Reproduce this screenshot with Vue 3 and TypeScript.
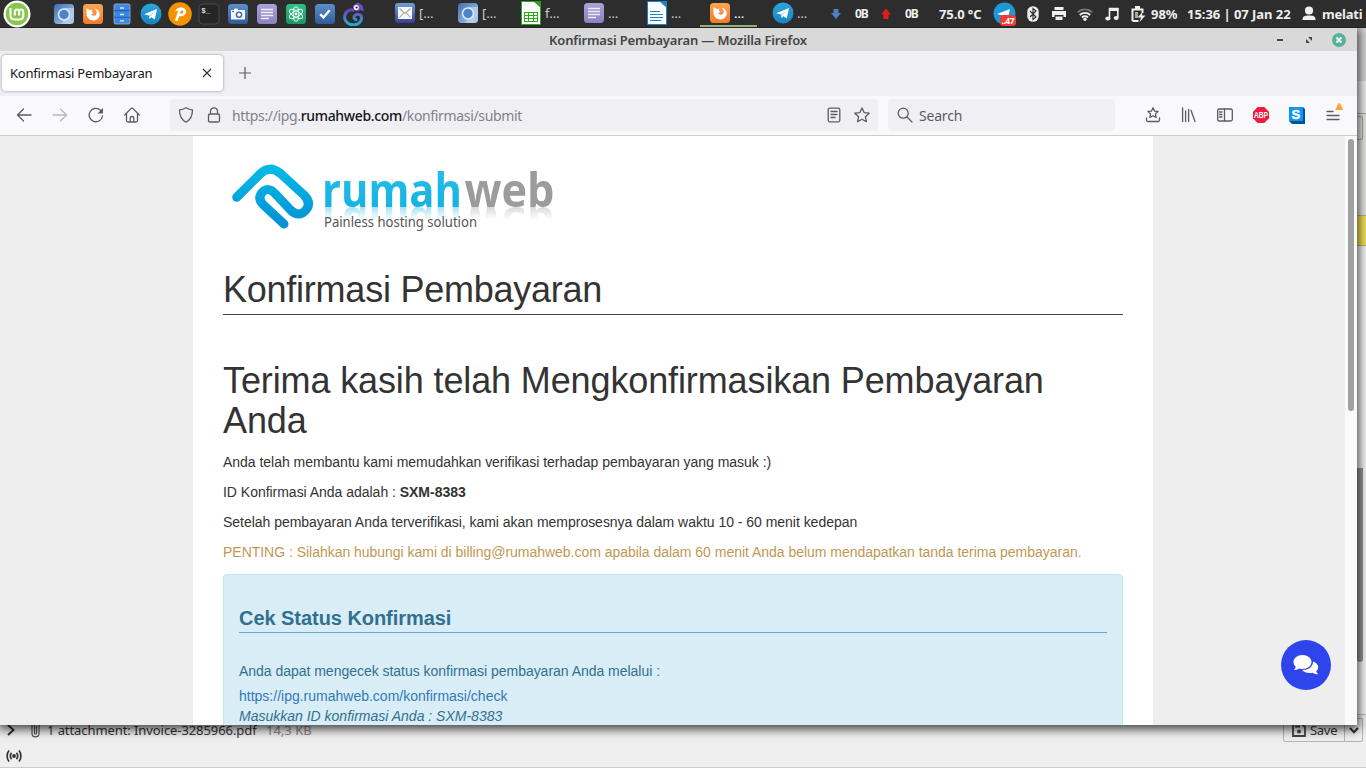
<script setup lang="ts">
interface Item {
  icon: string
  label?: string
  active?: boolean
}

const launchers: Item[] = [
  { icon: 'chromium' },
  { icon: 'firefox' },
  { icon: 'cabinet' },
  { icon: 'telegram' },
  { icon: 'pidgin' },
  { icon: 'terminal' },
  { icon: 'camera' },
  { icon: 'notes' },
  { icon: 'atom' },
  { icon: 'check' },
  { icon: 'chameleon' },
]

const windows: Item[] = [
  { icon: 'mail', label: '[…' },
  { icon: 'chromium', label: '[…' },
  { icon: 'calc', label: 'f…' },
  { icon: 'notes', label: '…' },
  { icon: 'writer', label: '…' },
  { icon: 'firefox', label: '…', active: true },
  { icon: 'telegram', label: '…' },
]
</script>

<template>
  <div class="desktop">
    <svg class="defs" width="0" height="0" aria-hidden="true">
      <defs>
        <linearGradient id="gChrome" x1="0" y1="0" x2="1" y2="1"><stop offset="0" stop-color="#3d6fb0" /><stop offset="1" stop-color="#b5d3ef" /></linearGradient>
        <linearGradient id="gFox" x1="0" y1="0" x2="0" y2="1"><stop offset="0" stop-color="#ffa551" /><stop offset="1" stop-color="#f07a2c" /></linearGradient>
        <linearGradient id="gTg" x1="0" y1="0" x2="0" y2="1"><stop offset="0" stop-color="#2ba6de" /><stop offset="1" stop-color="#1784c0" /></linearGradient>
        <linearGradient id="gLilac" x1="0" y1="0" x2="0" y2="1"><stop offset="0" stop-color="#aaa2d8" /><stop offset="1" stop-color="#8b81c2" /></linearGradient>
        <linearGradient id="gBlue" x1="0" y1="0" x2="0" y2="1"><stop offset="0" stop-color="#5d8fcc" /><stop offset="1" stop-color="#2f5a9c" /></linearGradient>
        <linearGradient id="gMail" x1="0" y1="0" x2="0" y2="1"><stop offset="0" stop-color="#6ba0d4" /><stop offset="1" stop-color="#3b3f95" /></linearGradient>
        <linearGradient id="gCham" x1="0" y1="0" x2="0" y2="1"><stop offset="0" stop-color="#6b45b8" /><stop offset="1" stop-color="#1faed0" /></linearGradient>
        <linearGradient id="gAtom" x1="0" y1="0" x2="0" y2="1"><stop offset="0" stop-color="#2fbf86" /><stop offset="1" stop-color="#1d9465" /></linearGradient>
        <linearGradient id="gLogo" x1="0" y1="0" x2="0" y2="1"><stop offset="0" stop-color="#05b8e6" /><stop offset="1" stop-color="#0492d6" /></linearGradient>
        <linearGradient id="gWord" x1="0" y1="0" x2="0" y2="1"><stop offset="0" stop-color="#2fc2e8" /><stop offset="1" stop-color="#0eaee2" /></linearGradient>
        <symbol id="chromium" viewBox="0 0 22 22">
          <rect x="1" y="1" width="20" height="20" rx="3.5" fill="url(#gChrome)" />
          <path d="M11 5h10v7l-5 9H8l5-6z" fill="#b9d3ee" opacity=".75" />
          <circle cx="11" cy="11.5" r="6.2" fill="#dfeaf6" /><circle cx="11" cy="11.5" r="4.7" fill="#4c84c8" />
        </symbol>
        <symbol id="firefox" viewBox="0 0 22 22">
          <rect x="1" y="1" width="20" height="20" rx="3.5" fill="url(#gFox)" />
          <path d="M5.2 5.4 7.7 7l2.8-.2-1 2 2.2 1.1-2.4 1.2c.5 2 3.7 2.2 5 .4 1.1-1.9 0-4-1.6-5.8 3.5.7 5.4 3.2 5 6.200-.4 3.300-3 5.500-6.300 5.500-3.800 0-6.900-2.900-6.900-6.700 0-2 .2-3.800-.3-5.300z" fill="#fff" />
        </symbol>
        <symbol id="cabinet" viewBox="0 0 22 22">
          <rect x="3" y="1" width="16" height="20" rx="1.5" fill="#3c87e2" stroke="#a9b3c4" stroke-width=".8" />
          <path d="M3 7.7h16M3 14.3h16" stroke="#1c5eb2" /><path d="M9 5h4M9 11.5h4M9 17.8h4" stroke="#d9ecff" stroke-width="1.3" />
        </symbol>
        <symbol id="telegram" viewBox="0 0 22 22">
          <circle cx="11" cy="11" r="10.5" fill="url(#gTg)" />
          <path d="M4.200 11.200 17 6l-2.200 10.600-3.400-2.400-2 1.900-.6-3.500z" fill="#fff" /><path d="m9 12.800 5.500-4.600-4.400 5.500-.6 2.300z" fill="#a9cfe6" />
        </symbol>
        <symbol id="pidgin" viewBox="0 0 24 24">
          <circle cx="12" cy="12" r="11.8" fill="#f49200" />
          <path d="M7 9.500C8 6.500 11 5 14 5.500c3.200.5 4.600 3 3.800 5.500-.8 2.600-3.400 3.600-6.600 3.300L9.500 19l-2.700-.2 3.400-10.300z" fill="#fff" /><path d="m13 8.500-1 3.300c2 .1 3-.7 3.200-1.900.1-1-.8-1.400-2.200-1.400z" fill="#f49200" />
        </symbol>
        <symbol id="terminal" viewBox="0 0 22 22">
          <rect x="1" y="1" width="20" height="20" rx="3.5" fill="#262626" stroke="#4b4b4b" />
          <text x="3.300" y="10" font-size="7.5" fill="#ddd" font-family="Liberation Mono" font-weight="700">$_</text>
        </symbol>
        <symbol id="camera" viewBox="0 0 22 22">
          <rect x="1" y="1" width="20" height="20" rx="3.5" fill="url(#gBlue)" />
          <path d="M4 7h3l.5-1.500h3L11 7h7v9.500H4z" fill="#f5f7fb" /><circle cx="12" cy="11.700" r="3.300" fill="#3866a8" /><circle cx="12" cy="11.700" r="1.900" fill="#f5f7fb" /><path d="M5 8.500h2" stroke="#3866a8" />
        </symbol>
        <symbol id="notes" viewBox="0 0 22 22">
          <rect x="1" y="1" width="20" height="20" rx="3.5" fill="url(#gLilac)" />
          <path d="M5 6.500h12M5 9.500h12M5 12.500h12M5 15.500h8" stroke="#eeecf8" stroke-width="1.4" />
        </symbol>
        <symbol id="atom" viewBox="0 0 22 22">
          <rect x="1" y="1" width="20" height="20" rx="3.5" fill="url(#gAtom)" />
          <g fill="none" stroke="#dff7ec" stroke-width="1.1"><ellipse cx="11" cy="11" rx="2.9" ry="7.3" /><ellipse cx="11" cy="11" rx="2.9" ry="7.3" transform="rotate(60 11 11)" /><ellipse cx="11" cy="11" rx="2.9" ry="7.3" transform="rotate(120 11 11)" /></g><circle cx="11" cy="11" r="1.4" fill="#fff" />
        </symbol>
        <symbol id="check" viewBox="0 0 22 22">
          <rect x="1" y="1" width="20" height="20" rx="3.5" fill="url(#gBlue)" />
          <path d="m6.200 11.200 3.200 3.300 6.200-7.300" fill="none" stroke="#fff" stroke-width="2.4" />
        </symbol>
        <symbol id="chameleon" viewBox="0 0 22 24">
          <path d="M11.500 8.500C7 6 1.500 10 1.600 15c.1 5 4.500 8 9.400 7.800 5-.2 8-4 7.500-7.600-.4-2.800-4.800-4-6.800-1.800-1.700 2-.1 4.700 2.500 4" fill="none" stroke="url(#gCham)" stroke-width="3" />
          <path d="M10 3.500 15 .5l4.500 3 1.300 5.500-3.500-1-3 1.500-4.500-1z" fill="#6a50bd" /><circle cx="13.300" cy="5.500" r="2.500" fill="#fff" /><circle cx="13.600" cy="5.500" r="1.100" fill="#222" />
        </symbol>
        <symbol id="mail" viewBox="0 0 22 22">
          <rect x="1" y="1" width="20" height="20" rx="3" fill="url(#gMail)" />
          <rect x="4" y="5" width="14" height="12" fill="#f6f6f4" /><path d="m5.500 6.500 5.500 5 5.500-5M5.500 15.500l4-4.500M16.500 15.500l-4-4.500" fill="none" stroke="#aaa9a4" stroke-width="1.1" />
        </symbol>
        <symbol id="calc" viewBox="0 0 22 24">
          <path d="M1.500.5H15l5.500 5v18h-19z" fill="#fff" stroke="#2ca81f" /><path d="M13 0h8v7z" fill="#2c9f1e" />
          <path d="M4.500 11.500h13v9h-13zM4.500 14.500h13M4.500 17.500h13M8.500 11.500v9M13.500 11.500v9" fill="none" stroke="#2ca81f" stroke-width="1.1" />
        </symbol>
        <symbol id="writer" viewBox="0 0 22 24">
          <path d="M1.500.5H15l5.500 5v18h-19z" fill="#fff" stroke="#1584cd" /><path d="M13 0h8v7z" fill="#1584cd" />
          <path d="M4 10.500h10M4 13.500h13M4 16.500h13M4 19.500h11" stroke="#1584cd" stroke-width="1.2" />
        </symbol>
      </defs>
    </svg>

    <header class="panel">
      <svg class="mint" width="28" height="28" viewBox="0 0 28 28">
        <circle cx="14" cy="14" r="13.5" fill="#fff" /><circle cx="14" cy="14" r="11.3" fill="#86c64b" />
        <path d="M7.500 8v7.500c0 2.500 1.500 4 4 4h4.500c2.700 0 4.300-1.500 4.300-4V12c0-3.300-4.200-3.300-4.200 0v3.500M16.100 12c0-3.300-4.300-3.300-4.300 0v3.500" fill="none" stroke="#fff" stroke-width="2.1" />
      </svg>
      <nav class="launchers">
        <span v-for="l in launchers" :key="l.icon" class="launcher"><svg :class="['ico', l.icon]"><use :href="'#' + l.icon" /></svg></span>
      </nav>
      <nav class="tasks">
        <span v-for="(w, i) in windows" :key="i" :class="['task', { active: w.active }]"><svg :class="['ico', w.icon]"><use :href="'#' + w.icon" /></svg><span class="task-label">{{ w.label }}</span></span>
      </nav>
      <div class="tray">
        <svg class="net" width="12" height="12" viewBox="0 0 12 12"><path d="M3.500 1h5v4H11l-5 6-5-6h2.500z" fill="#4d7fc0" /></svg>
        <span class="rate down">0B</span>
        <svg class="net" width="12" height="12" viewBox="0 0 12 12"><path d="M3.500 11h5V6.500H11l-5-6-5 6h2.500z" fill="#e01d1d" /></svg>
        <span class="rate up">0B</span>
        <span class="temp">75.0 °C</span>
        <svg class="tray-tg" width="23" height="25" viewBox="0 0 23 25">
          <circle cx="11.500" cy="12.500" r="11" fill="#1d97d6" /><path d="m4 13 13-5-2 9-4-2-3-1z" fill="#fff" />
          <rect x="7" y="14" width="16" height="11" rx="3" fill="#ef3b36" /><text x="8.500" y="22.500" font-family="Noto Sans" font-size="8.5" fill="#fff" textLength="13">..47</text>
        </svg>
        <svg class="bt" width="12" height="16" viewBox="0 0 12 16"><rect x=".3" y=".2" width="11.400" height="15.600" rx="5.500" fill="#f0f0f0" /><path d="m3 5 6 6-3 2.500v-11L9 5l-6 6" fill="none" stroke="#2d2d2d" stroke-width="1.1" /></svg>
        <svg class="pr" width="14" height="14" viewBox="0 0 14 14"><path d="M2.500 0h9v3h-9zM0 4h14v6h-2.500V8h-9v2H0zM3.500 9.500h7V13h-7z" fill="#f0f0f0" /></svg>
        <svg class="wf" width="16" height="14" viewBox="0 0 16 14"><g fill="none" stroke-width="1.9"><path d="M.8 5.200a10.500 10.500 0 0 1 14.400 0" stroke="#777" /><path d="M2.800 8a7.500 7.500 0 0 1 10.400 0M5 10.500a4.300 4.300 0 0 1 6 0" stroke="#f0f0f0" /></g><circle cx="8" cy="12.300" r="1.700" fill="#f0f0f0" /></svg>
        <svg class="mu" width="14" height="14" viewBox="0 0 14 14"><path d="M4.500 11V1.500h8.300v9" fill="none" stroke="#f0f0f0" stroke-width="1.6" /><path d="M4 1h9.500v3H4z" fill="#f0f0f0" /><ellipse cx="2.900" cy="11.500" rx="2.600" ry="2" fill="#f0f0f0" /><ellipse cx="11.200" cy="11" rx="2.500" ry="2" fill="#f0f0f0" /></svg>
        <svg class="ba" width="15" height="16" viewBox="0 0 15 16"><path d="M1.500 15V3.500h10V7M1.500 15h6" fill="none" stroke="#f0f0f0" stroke-width="2" /><path d="M4 0h5v3H4z" fill="#f0f0f0" /><path d="M4 6h3v6H4z" fill="#aaa" /><path d="M11.500 6 6.500 11.500H10L8.500 16l6-6.500h-3.500z" fill="#f0f0f0" /></svg>
        <span class="pct">98%</span>
        <span class="clock">15:36 | 07 Jan 22</span>
        <svg class="us" width="14" height="15" viewBox="0 0 14 15"><circle cx="7" cy="4.500" r="4.100" fill="#f0f0f0" /><path d="M.5 14c0-4 2.500-4.500 6.500-4.500s6.500.5 6.500 4.500z" fill="#f0f0f0" /></svg>
        <span class="user">melati</span>
      </div>
    </header>

    <section class="mailer">
      <div class="mail-body">
        <div class="side">
          <div class="side-title"></div>
          <div class="side-tools"></div>
          <div class="side-rest"><div class="side-button"></div></div>
          <div class="side-flag"></div>
          <div class="side-scroll"><div class="side-thumb"></div></div>
        </div>
      </div>
      <div class="attachments">
        <svg class="chev" width="8" height="12" viewBox="0 0 8 12"><path d="m1 1 5.500 5L1 11" fill="none" stroke="#333" stroke-width="2" /></svg>
        <svg class="clip" width="9" height="16" viewBox="0 0 9 16"><path d="M1 3v8.500c0 4.500 7 4.500 7 0V3c0-3-4.500-3-4.500 0v8c0 1.500 2 1.500 2 0V4" fill="none" stroke="#555" stroke-width="1.2" /></svg>
        <span class="att-name">1 attachment: Invoice-3285966.pdf</span>
        <span class="att-size">14,3 KB</span>
        <div class="save">
          <span class="save-main"><svg width="14" height="14" viewBox="0 0 14 14"><path d="M1 1h9l3 3v9H1z" fill="none" stroke="#444" stroke-width="1.8" /><circle cx="7" cy="8.500" r="2" fill="#444" /><path d="M3 3.500h5" stroke="#444" stroke-width="2" /></svg><span class="save-label">Save</span></span>
          <span class="save-more"><svg width="10" height="7" viewBox="0 0 10 7"><path d="m1 1 4 4.200L9 1" fill="none" stroke="#333" stroke-width="2" /></svg></span>
        </div>
      </div>
      <div class="status"><svg width="16" height="12" viewBox="0 0 16 12"><g fill="none" stroke="#333" stroke-width="1.7"><path d="M3 .5c-2.500 3-2.500 8 0 11M13 .5c2.500 3 2.500 8 0 11M5.500 2.800c-1.500 2-1.500 4.400 0 6.400M10.500 2.800c1.500 2 1.500 4.400 0 6.400" /></g><circle cx="8" cy="6" r="1.900" fill="#333" /></svg></div>
    </section>

    <section class="browser">
      <div class="titlebar">
        <span class="title">Konfirmasi Pembayaran — Mozilla Firefox</span>
        <div class="controls">
          <svg width="8" height="8" viewBox="0 0 8 8"><path d="M1 4h6" stroke="#444" stroke-width="2" /></svg>
          <svg width="8" height="8" viewBox="0 0 8 8"><path d="M3 1h4v4zM1 3v4h4z" fill="#444" /></svg>
          <svg width="14" height="14" viewBox="0 0 14 14"><circle cx="7" cy="7" r="7" fill="#57b099" /><path d="m4.500 4.500 5 5m0-5-5 5" stroke="#fff" stroke-width="1.8" /></svg>
        </div>
      </div>
      <div class="tabstrip">
        <div class="tab"><span class="tab-title">Konfirmasi Pembayaran</span><svg width="10" height="10" viewBox="0 0 10 10"><path d="m1 1 8 8m0-8-8 8" stroke="#333" stroke-width="1.2" /></svg></div>
        <svg class="plus" width="12" height="12" viewBox="0 0 12 12"><path d="M6 0v12M0 6h12" stroke="#5b5b66" stroke-width="1.2" /></svg>
      </div>
      <div class="toolbar">
        <div class="navs">
          <svg width="16" height="16" viewBox="0 0 16 16"><path d="M15 8H1.500m6-6L1.500 8l6 6" class="ln" /></svg>
          <svg class="dim" width="16" height="16" viewBox="0 0 16 16"><path d="M1 8h13.500m-6-6 6 6-6 6" class="ln" /></svg>
          <svg width="16" height="16" viewBox="0 0 16 16"><path d="M14.500 9A6.700 6.700 0 1 1 12.500 3.200l1.500 1.500" class="ln" /><path d="M15 1v5.500H9.500z" fill="#5b5b66" /></svg>
          <svg width="16" height="16" viewBox="0 0 16 16"><path d="m.7 8 6.500-6.600q.8-.8 1.600 0L15.300 8M2.500 6.500v7q0 1.500 1.500 1.500h8q1.500 0 1.500-1.500v-7M6.200 15v-4q0-1.500 1.800-1.500T9.800 11v4" class="ln" /></svg>
        </div>
        <div class="urlbar">
          <svg width="16" height="16" viewBox="0 0 16 16"><path d="M8 .8q3 2 6.500 2c0 6-1.800 10-6.500 12.400C3.300 12.800 1.500 8.800 1.500 2.800Q5 2.800 8 .8z" class="ln" /></svg>
          <svg class="lock" width="14" height="16" viewBox="0 0 14 16"><path d="M3.500 7V4.300a3.500 3.500 0 0 1 7 0V7M1.500 8.500q0-1.500 1.500-1.500h8q1.500 0 1.500 1.500v5q0 1.500-1.500 1.500H3q-1.500 0-1.500-1.500z" class="ln" /></svg>
          <span class="url">https://ipg.<b>rumahweb.com</b>/konfirmasi/submit</span>
          <svg class="reader" width="14" height="16" viewBox="0 0 14 16"><rect x="1.200" y="1.200" width="11.600" height="13.600" rx="1.500" class="ln" /><path d="M4 4.500h6M4 7.500h6M4 10.500h4" class="ln" /></svg>
          <svg width="16" height="16" viewBox="0 0 16 16"><path d="m8 .9 2.100 4.700 5.100.6-3.800 3.500 1 5L8 12.300l-4.400 2.400 1-5L.8 6.200l5.100-.6z" class="ln" /></svg>
        </div>
        <div class="search"><svg width="16" height="16" viewBox="0 0 16 16"><circle cx="6.200" cy="6.200" r="5" class="ln" /><path d="m10 10 5 5" class="ln" /></svg><span>Search</span></div>
        <div class="exts">
          <svg width="16" height="16" viewBox="0 0 16 16"><path d="m8 .8 1.500 3.300 3.500.4-2.600 2.400.7 3.600L8 8.700l-3.100 1.800.7-3.600L3 4.500l3.500-.4zM1.500 11v2q0 1.500 1.500 1.500h10q1.500 0 1.500-1.500v-2" class="ln" /></svg>
          <svg width="16" height="16" viewBox="0 0 16 16"><path d="M1.600 1v13.500M4.600 4v10.500M7.600 2.500v12M10 3.200l4 11.300" class="ln" /></svg>
          <svg width="16" height="16" viewBox="0 0 16 16"><rect x=".7" y="2" width="14.600" height="12" rx="1.500" class="ln" /><path d="M7.500 2v12M2.500 5H5M2.500 7.500H5M2.500 10H5" class="ln" /></svg>
          <svg width="16" height="16" viewBox="0 0 16 16"><path d="M4.700 0h6.600L16 4.700v6.600L11.300 16H4.700L0 11.300V4.700z" fill="#ee1c40" /><text x="1" y="11.400" font-family="Liberation Sans" font-weight="700" font-size="9.5" fill="#fff" textLength="14" lengthAdjust="spacingAndGlyphs">ABP</text></svg>
          <svg class="skype" width="17" height="17" viewBox="0 0 17 17"><path d="M0 0h14l2 2v15H3l-3-3z" fill="#06518f" /><path d="M0 0h14v14H0z" fill="#0896fb" /><text x="2.500" y="11.600" font-family="Liberation Sans" font-weight="700" font-size="13" fill="#fff" stroke="#fff" stroke-width=".5">S</text></svg>
          <svg class="menu" width="18" height="22" viewBox="0 0 18 22"><path d="M1 9.500h6M1 13.500h12M1 17.500h12" class="ln" /><path d="M9.200 8 12 2q1.200-2 2.400 0l2.800 6z" fill="#ffa436" /></svg>
        </div>
      </div>

      <div class="viewport">
        <main class="page">
          <div class="logo">
            <svg width="96" height="82" viewBox="0 0 96 82">
              <path d="M13.700 47.300 37 24Q47 14.500 57.500 23.500L81 45Q89 53 82.500 60.500 76 67.500 68 60.500L52 43.500Q45.500 36.500 39.500 42 34 48 40 54.500L61 74" fill="none" stroke="url(#gLogo)" stroke-width="9" stroke-linecap="round" stroke-linejoin="round" />
            </svg>
            <div class="brand">
              <svg class="word" width="240" height="42" viewBox="0 0 240 42">
                <g font-family="Open Sans" font-weight="700" font-size="46"><text x="3" y="41.500" textLength="140" lengthAdjust="spacingAndGlyphs" fill="url(#gWord)">rumah</text><text x="145.500" y="41.500" textLength="90" lengthAdjust="spacingAndGlyphs" fill="#9c9c9c">web</text></g>
              </svg>
              <svg class="tagline" width="240" height="20" viewBox="0 0 240 20"><text x="5" y="14" font-family="Noto Sans" font-size="13.5" fill="#555" textLength="153" lengthAdjust="spacingAndGlyphs">Painless hosting solution</text></svg>
            </div>
          </div>
          <h1 class="head">Konfirmasi Pembayaran</h1>
          <h1 class="thanks">Terima kasih telah Mengkonfirmasikan Pembayaran Anda</h1>
          <p>Anda telah membantu kami memudahkan verifikasi terhadap pembayaran yang masuk :)</p>
          <p>ID Konfirmasi Anda adalah : <strong>SXM-8383</strong></p>
          <p>Setelah pembayaran Anda terverifikasi, kami akan memprosesnya dalam waktu 10 - 60 menit kedepan</p>
          <p class="warn">PENTING : Silahkan hubungi kami di billing@rumahweb.com apabila dalam 60 menit Anda belum mendapatkan tanda terima pembayaran.</p>
          <div class="alert">
            <h4>Cek Status Konfirmasi</h4>
            <p>Anda dapat mengecek status konfirmasi pembayaran Anda melalui :</p>
            <a>https://ipg.rumahweb.com/konfirmasi/check</a>
            <em>Masukkan ID konfirmasi Anda : SXM-8383</em>
          </div>
        </main>
        <div class="scrollbar"><div class="thumb"></div></div>
        <div class="chat"><svg width="26" height="22" viewBox="0 0 26 22"><path d="M9.500 1c5 0 9 3 9 7s-4 7-9 7q-1.800 0-3.400-.5Q3.500 16 .8 16q1.700-1.500 2-3.200C1.200 11.500.5 9.800.5 8c0-4 4-7 9-7z" fill="#fff" /><path d="M20 7.500c3.200 1 5.200 3.200 5.200 5.700 0 1.500-.7 3-2 4 .4 1.300 1.200 2.200 2 3-2 0-4-.5-5.500-1.500-4.500 1-8.700-.2-10.500-2.700 6 .2 11-3 10.800-8.500z" fill="#fff" /></svg></div>
      </div>
    </section>
  </div>
</template>

<style>
body { margin: 0; overflow: hidden; }
</style>

<style scoped>
* { box-sizing: border-box; }
.desktop { position: relative; display: flex; flex-direction: column; width: 1366px; height: 768px; overflow: hidden; background: #efefef; font-family: "Noto Sans", sans-serif; white-space: nowrap; }
.defs { position: absolute; }
svg { flex: none; display: block; }

.panel { position: relative; z-index: 3; flex: none; display: flex; align-items: center; height: 28px; background: #2d2d2d; border-bottom: 1px solid #222; color: #eee; }
.mint { margin-left: 3px; }
.launchers { display: flex; margin-left: 18px; }
.launcher { display: flex; justify-content: center; align-items: center; width: 29px; height: 27px; }
.ico { width: 22px; height: 22px; }
.ico.pidgin { width: 24px; height: 24px; }
.ico.chameleon, .ico.calc, .ico.writer { height: 24px; }
.tasks { display: flex; gap: 6px; margin-left: 17px; }
.task { display: flex; align-items: center; width: 57px; height: 27px; padding-left: 9px; gap: 3px; font-size: 13px; color: #ccc; border-bottom: 2px solid transparent; }
.task.active { border-bottom-color: #92b372; color: #fff; }
.task-label { line-height: 24px; }
.tray { display: flex; align-items: center; margin-left: 10px; font-size: 13px; font-weight: 700; line-height: 26px; }
.net { width: 12px; }
.rate { font-size: 12px; width: 23px; margin-left: 13px; letter-spacing: -1px; margin-right: 2px; }
.rate.up { margin-left: 13px; width: 34px; margin-right: 0; }
.temp { width: 54px; letter-spacing: -.1px; }
.tray-tg { margin-right: 11px; }
.bt { margin-right: 13px; }
.pr { margin-right: 11px; }
.wf { margin-right: 12px; }
.mu { margin-right: 12px; }
.ba { margin-right: 5px; }
.pct { width: 36px; letter-spacing: 0; }
.clock { width: 115px; letter-spacing: -.05px; }
.us { margin-right: 6px; }
.user { letter-spacing: -.2px; }

.mailer { display: flex; flex-direction: column; flex: 1; }
.mail-body { flex: 1; display: flex; justify-content: flex-end; border-bottom: 1px solid #c4c4c4; }
.side { width: 9px; display: flex; flex-direction: column; background: #eee; }
.side-title { height: 53px; background: #d6d6d6; }
.side-tools { height: 33px; border-bottom: 1px solid #aaa; background: #efefef; }
.side-rest { height: 101px; background: #e9e9e7; padding-top: 2px; }
.side-button { width: 6px; height: 24px; border: 1px solid #aaa; border-left: 0; border-radius: 0 3px 3px 0; }
.side-flag { height: 31px; background: #f4e657; border: solid #b8b28a; border-width: 1px 0; }
.side-scroll { flex: 1; background: #f7f7f7; padding-top: 222px; }
.side-thumb { width: 6px; height: 194px; background: #999; border-radius: 0 0 4px 4px; }
.attachments { height: 30px; display: flex; align-items: center; padding: 0 3px 0 7px; color: #333; font-size: 13px; }
.clip { margin-left: 16px; }
.att-name { margin-left: 7px; width: 219px; letter-spacing: -.08px; }
.att-size { color: #8a8a8a; }
.save { display: flex; margin-left: auto; height: 24px; border: 1px solid #b5b5b5; border-radius: 2px; }
.save-main { display: flex; align-items: center; width: 60px; padding-left: 8px; gap: 4px; }
.save-label { letter-spacing: -.3px; }
.save-more { display: flex; align-items: center; justify-content: center; width: 18px; border-left: 1px solid #b5b5b5; }
.status { height: 23px; padding: 5px 6px; border-bottom: 1px solid #ccc; }

.browser { position: absolute; z-index: 2; left: 0; top: 28px; width: 1357px; height: 697px; display: flex; flex-direction: column; background: #eee; box-shadow: 0 2px 10px 2px rgba(0, 0, 0, .75); }
.titlebar { flex: none; display: flex; align-items: center; justify-content: center; height: 23px; background: #d9d9d9; color: #444; }
.title { font-size: 13px; font-weight: 600; line-height: 23px; margin: 1px 0 0 80px; flex: 1; text-align: center; letter-spacing: -.15px; }
.controls { display: flex; align-items: center; gap: 21px; width: 81px; }
.controls svg:nth-child(3) { margin-left: -2px; }
.tabstrip { flex: none; display: flex; align-items: center; height: 45px; background: #f0f0f4; padding: 0 0 1px 2px; }
.tab { display: flex; align-items: center; justify-content: space-between; width: 221px; height: 36px; padding: 0 11px 0 8px; background: #fff; border-radius: 4px; box-shadow: 0 0 3px rgba(90, 80, 120, .65); color: #15141a; font-size: 13px; }
.tab-title { letter-spacing: -.2px; }
.plus { margin-left: 16px; }
.toolbar { flex: none; display: flex; align-items: center; height: 40px; padding-bottom: 1px; background: #f9f9fb; border-bottom: 1px solid #ccc; }
.ln { fill: none; stroke: #5b5b66; stroke-width: 1.300; stroke-linecap: round; stroke-linejoin: round; }
.navs { display: flex; gap: 20px; margin-left: 16px; width: 154px; }
.dim { opacity: .4; }
.urlbar { display: flex; align-items: center; width: 708px; height: 32px; padding: 0 8px; background: #f0f0f4; border-radius: 4px; }
.lock { margin-left: 13px; }
.url { margin-left: 11px; color: #82818a; font-size: 14px; letter-spacing: -.34px; }
.url b { color: #15141a; font-weight: 500; }
.reader { margin-left: auto; margin-right: 13px; }
.search { display: flex; align-items: center; gap: 6px; width: 227px; height: 32px; margin-left: 10px; padding-left: 9px; background: #f0f0f4; border-radius: 4px; color: #5b5b66; font-size: 14px; letter-spacing: -.2px; }
.exts { display: flex; align-items: center; gap: 20px; margin-left: 30px; }
.skype { margin-top: 0; }
.menu { margin: -5px 0 0; }

.viewport { position: relative; flex: 1; min-height: 0; display: flex; overflow: hidden; background: #eee; }
.page { width: 960px; height: 700px; flex: none; margin-left: 193px; padding: 14px 30px 0; background: #fff; color: #333; font: 14px/20px "Liberation Sans", Arial, sans-serif; white-space: normal; }
.logo { display: flex; height: 82px; }
.brand { padding-top: 15px; }
.word { overflow: hidden; -webkit-box-reflect: below 0 linear-gradient(to bottom, transparent 70%, rgba(0, 0, 0, .38)); }
.tagline { margin-top: 6px; }
h1 { margin: 0; font-size: 36px; line-height: 39.600px; font-weight: 400; }
.head { margin-top: 38px; height: 45px; border-bottom: 1px solid #444; letter-spacing: -.24px; }
.thanks { margin: 46px 0 11.800px; letter-spacing: -.12px; }
p { margin: 0 0 10px; white-space: nowrap; letter-spacing: -.025px; }
.warn { color: #c09853; margin-bottom: 12px; }
.alert { height: 200px; padding: 30px 15px; background: #d9edf7; border: 1px solid #bce8f1; border-radius: 4px; color: #31708f; }
h4 { margin: 0 0 28px; height: 28px; font-size: 20px; line-height: 26px; font-weight: 700; border-bottom: 1px solid #5fa9d3; letter-spacing: -.05px; }
.alert p { margin: 0 0 5px; }
.alert a, .alert em { display: block; line-height: 20px; }
.alert a { color: #337ab7; }
.scrollbar { width: 12px; margin-left: auto; padding: 3px 3px; background: #fafafa; }
.thumb { width: 6px; height: 272px; border-radius: 3px; background: #a0a0a0; }
.chat { position: absolute; right: 26px; bottom: 35px; display: flex; align-items: center; justify-content: center; width: 50px; height: 50px; border-radius: 50%; background: #2f45ec; }
</style>
